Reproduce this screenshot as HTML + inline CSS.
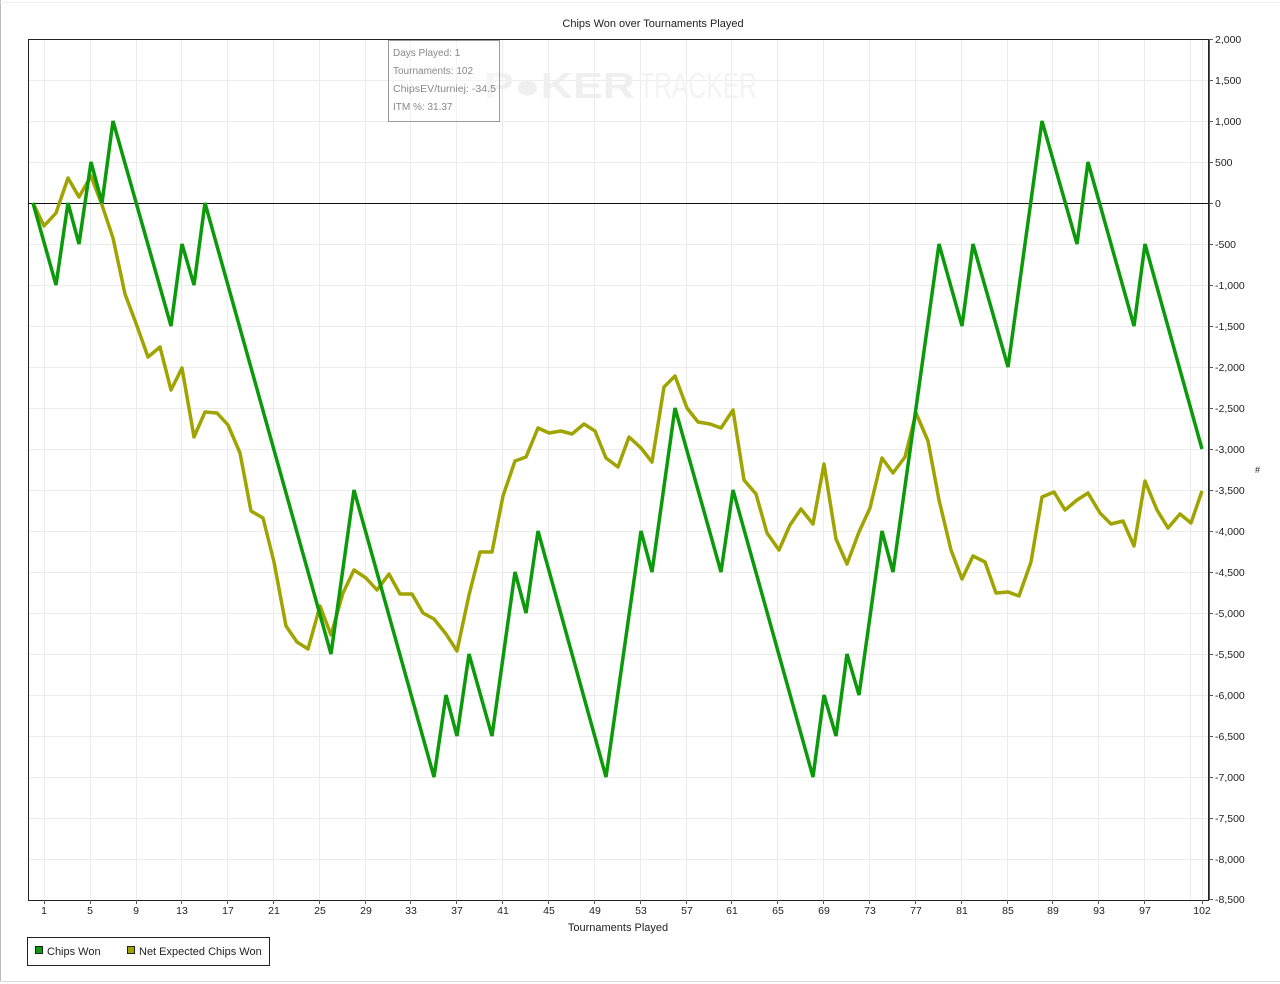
<!DOCTYPE html>
<html><head><meta charset="utf-8"><style>
html,body{margin:0;padding:0;background:#fff;width:1280px;height:984px;overflow:hidden}
svg text{font-family:"Liberation Sans",sans-serif;}
</style></head><body>
<svg width="1280" height="984" viewBox="0 0 1280 984" xmlns="http://www.w3.org/2000/svg">
<rect x="0" y="0" width="1280" height="984" fill="#fff"/>
<line x1="0.5" y1="0" x2="0.5" y2="982" stroke="#bbb"/>
<line x1="0" y1="981.5" x2="1280" y2="981.5" stroke="#ddd"/>
<line x1="0" y1="2.5" x2="1280" y2="2.5" stroke="#eee"/>
<text x="653" y="27" font-size="11" text-anchor="middle" fill="#222">Chips Won over Tournaments Played</text>
<g stroke="#ececec" stroke-width="1">
<path d="M28 80.5H1209M28 121.5H1209M28 162.5H1209M28 244.5H1209M28 285.5H1209M28 326.5H1209M28 367.5H1209M28 408.5H1209M28 449.5H1209M28 490.5H1209M28 531.5H1209M28 572.5H1209M28 613.5H1209M28 654.5H1209M28 695.5H1209M28 736.5H1209M28 777.5H1209M28 818.5H1209M28 859.5H1209"/>
<path d="M44.5 39V900M90.5 39V900M136.5 39V900M181.5 39V900M227.5 39V900M273.5 39V900M319.5 39V900M365.5 39V900M410.5 39V900M456.5 39V900M502.5 39V900M548.5 39V900M594.5 39V900M640.5 39V900M686.5 39V900M731.5 39V900M777.5 39V900M823.5 39V900M869.5 39V900M915.5 39V900M961.5 39V900M1007.5 39V900M1052.5 39V900M1098.5 39V900M1144.5 39V900M1190.5 39V900M1202.5 39V900"/>
</g>
<text x="484" y="98" font-size="36" font-weight="bold" fill="#efefef" textLength="151" lengthAdjust="spacingAndGlyphs">P&#9679;KER</text>
<text x="639" y="98" font-size="36" fill="#f3f3f3" textLength="118" lengthAdjust="spacingAndGlyphs">TRACKER</text>
<rect x="28.5" y="39.5" width="1180" height="861" fill="none" stroke="#222"/>
<line x1="28" y1="203.5" x2="1209" y2="203.5" stroke="#111"/>
<line x1="1209.5" y1="39" x2="1209.5" y2="900" stroke="#555"/>
<polyline fill="none" stroke="#a0a400" stroke-width="3.5" stroke-linejoin="round" points="33,203 44,226 56,213 68,178 79,197 91,176 102,205 113,238 125,294 137,326 148,357 160,347 171,390 182,368 194,437 205,412 217,413 228,425 240,453 251,511 263,518 274,562 286,626 297,642 308,649 320,606 331,635 343,593 354,570 366,578 377,590 389,574 400,594 412,594 423,613 434,619 446,634 457,651 469,595 480,552 492,552 503,496 515,461 526,457 538,428 549,433 561,431 572,434 584,424 595,431 606,458 618,467 629,437 641,448 652,462 664,387 675,376 687,408 698,422 710,424 721,428 733,410 744,480 756,494 767,533 779,550 790,525 801,509 813,524 824,464 836,539 847,564 859,532 870,508 882,458 893,473 905,457 916,413 928,441 939,500 951,550 962,579 973,556 985,562 996,593 1008,592 1019,596 1031,562 1042,497 1054,492 1065,510 1077,500 1088,493 1100,513 1111,524 1123,521 1134,546 1145,481 1157,510 1168,528 1180,514 1191,523 1202,491"/>
<polyline fill="none" stroke="#0c9a0c" stroke-width="3.5" stroke-linejoin="miter" points="33,203 56,285 68,203 79,244 91,162 102,203 113,121 171,326 182,244 194,285 205,203 331,654 354,490 434,777 446,695 457,736 469,654 492,736 515,572 526,613 538,531 606,777 641,531 652,572 675,408 721,572 733,490 813,777 824,695 836,736 847,654 859,695 882,531 893,572 939,244 962,326 973,244 1008,367 1042,121 1077,244 1088,162 1134,326 1145,244 1202,449"/>
<rect x="388.5" y="40.5" width="111" height="81" fill="#fff" fill-opacity="0.4" stroke="#999"/>
<g font-size="10" fill="#888">
<text x="393" y="56">Days Played: 1</text>
<text x="393" y="74">Tournaments: 102</text>
<text x="393" y="92" textLength="103" lengthAdjust="spacingAndGlyphs">ChipsEV/turniej: -34.5</text>
<text x="393" y="110">ITM %: 31.37</text>
</g>
<g stroke="#555"><path d="M1209 39.5h4M1209 80.5h4M1209 121.5h4M1209 162.5h4M1209 203.5h4M1209 244.5h4M1209 285.5h4M1209 326.5h4M1209 367.5h4M1209 408.5h4M1209 449.5h4M1209 490.5h4M1209 531.5h4M1209 572.5h4M1209 613.5h4M1209 654.5h4M1209 695.5h4M1209 736.5h4M1209 777.5h4M1209 818.5h4M1209 859.5h4M1209 899.5h4"/>
<path d="M44.5 900v4M90.5 900v4M136.5 900v4M181.5 900v4M227.5 900v4M273.5 900v4M319.5 900v4M365.5 900v4M410.5 900v4M456.5 900v4M502.5 900v4M548.5 900v4M594.5 900v4M640.5 900v4M686.5 900v4M731.5 900v4M777.5 900v4M823.5 900v4M869.5 900v4M915.5 900v4M961.5 900v4M1007.5 900v4M1052.5 900v4M1098.5 900v4M1144.5 900v4M1202.5 900v4"/></g>
<g font-size="10.5" fill="#222">
<text x="1215" y="43">2,000</text><text x="1215" y="84">1,500</text><text x="1215" y="125">1,000</text><text x="1215" y="166">500</text><text x="1215" y="207">0</text><text x="1215" y="248">-500</text><text x="1215" y="289">-1,000</text><text x="1215" y="330">-1,500</text><text x="1215" y="371">-2,000</text><text x="1215" y="412">-2,500</text><text x="1215" y="453">-3,000</text><text x="1215" y="494">-3,500</text><text x="1215" y="535">-4,000</text><text x="1215" y="576">-4,500</text><text x="1215" y="617">-5,000</text><text x="1215" y="658">-5,500</text><text x="1215" y="699">-6,000</text><text x="1215" y="740">-6,500</text><text x="1215" y="781">-7,000</text><text x="1215" y="822">-7,500</text><text x="1215" y="863">-8,000</text><text x="1215" y="903">-8,500</text>
<text x="1255" y="473" font-size="9">#</text>
</g>
<g font-size="10.5" fill="#222" text-anchor="middle">
<text x="44" y="914">1</text><text x="90" y="914">5</text><text x="136" y="914">9</text><text x="182" y="914">13</text><text x="228" y="914">17</text><text x="274" y="914">21</text><text x="320" y="914">25</text><text x="366" y="914">29</text><text x="411" y="914">33</text><text x="457" y="914">37</text><text x="503" y="914">41</text><text x="549" y="914">45</text><text x="595" y="914">49</text><text x="641" y="914">53</text><text x="687" y="914">57</text><text x="732" y="914">61</text><text x="778" y="914">65</text><text x="824" y="914">69</text><text x="870" y="914">73</text><text x="916" y="914">77</text><text x="962" y="914">81</text><text x="1008" y="914">85</text><text x="1053" y="914">89</text><text x="1099" y="914">93</text><text x="1145" y="914">97</text><text x="1202" y="914">102</text>
<text x="618" y="931" font-size="11">Tournaments Played</text>
</g>
<rect x="27.5" y="937.5" width="242" height="28" fill="#fff" stroke="#222"/>
<rect x="35.5" y="946.5" width="7" height="7" fill="#0c9a0c" stroke="#222"/>
<text x="47" y="955" font-size="11" fill="#222">Chips Won</text>
<rect x="127.5" y="946.5" width="7" height="7" fill="#a0a400" stroke="#222"/>
<text x="139" y="955" font-size="11" fill="#222">Net Expected Chips Won</text>
</svg>
</body></html>
